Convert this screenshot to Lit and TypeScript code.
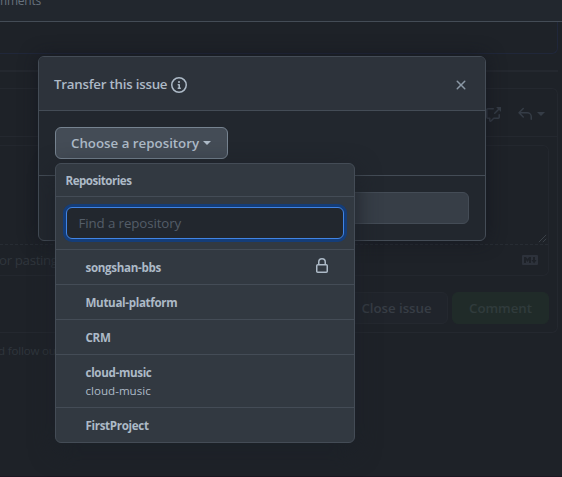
import { LitElement, html, css, svg, nothing } from "lit";
import { customElement, property } from "lit/decorators.js";

const ICONS: Record<string, unknown> = {
  info: svg`<path d="M8 1.5a6.5 6.5 0 100 13 6.5 6.5 0 000-13zM0 8a8 8 0 1116 0A8 8 0 010 8zm6.5-.25A.75.75 0 017.25 7h1a.75.75 0 01.75.75v2.75h.25a.75.75 0 010 1.5h-2a.75.75 0 010-1.5h.25v-2h-.25a.75.75 0 01-.75-.75zM8 6a1 1 0 100-2 1 1 0 000 2z"/>`,
  x: svg`<path d="M3.72 3.72a.75.75 0 011.06 0L8 6.94l3.22-3.22a.75.75 0 111.06 1.06L9.06 8l3.22 3.22a.75.75 0 11-1.06 1.06L8 9.06l-3.22 3.22a.75.75 0 01-1.06-1.06L6.94 8 3.72 4.78a.75.75 0 010-1.06z"/>`,
  lock: svg`<path fill-rule="evenodd" d="M4 4v2h-.25A1.75 1.75 0 002 7.75v5.5c0 .966.784 1.75 1.75 1.75h8.5A1.75 1.75 0 0014 13.25v-5.5A1.75 1.75 0 0012.25 6H12V4a4 4 0 10-8 0zm6.5 2V4a2.5 2.5 0 00-5 0v2h5zM3.75 7.5a.25.25 0 00-.25.25v5.5c0 .138.112.25.25.25h8.5a.25.25 0 00.25-.25v-5.5a.25.25 0 00-.25-.25z"/>`,
  cross: svg`<path d="M16 1.25v4.146a.25.25 0 01-.427.177L14.03 4.03l-3.75 3.75a.75.75 0 11-1.06-1.06l3.75-3.75-1.543-1.543A.25.25 0 0111.604 1h4.146a.25.25 0 01.25.25zM2.75 3.5a.25.25 0 00-.25.25v7.5c0 .138.112.25.25.25h2a.75.75 0 01.75.75v2.19l2.72-2.72a.75.75 0 01.53-.22h4.5a.25.25 0 00.25-.25v-2.5a.75.75 0 111.5 0v2.5A1.75 1.75 0 0113.25 13H9.06l-2.573 2.573A1.457 1.457 0 014 14.543V13H2.75A1.75 1.75 0 011 11.25v-7.5C1 2.784 1.784 2 2.75 2h5.5a.75.75 0 010 1.5h-5.5z"/>`,
  reply: svg`<path d="M6.78 1.97a.75.75 0 010 1.06L3.81 6h6.44A4.75 4.75 0 0115 10.75v2.5a.75.75 0 01-1.5 0v-2.5a3.25 3.25 0 00-3.25-3.25H3.81l2.97 2.97a.75.75 0 11-1.06 1.06L1.47 7.28a.75.75 0 010-1.06l4.25-4.25a.75.75 0 011.06 0z"/>`,
  markdown: svg`<path fill-rule="evenodd" d="M1 3h14a1 1 0 011 1v8a1 1 0 01-1 1H1a1 1 0 01-1-1V4a1 1 0 011-1zM9 11V5H7L5.5 7 4 5H2v6h2V8l1.5 1.9L7 8v3h2zm3.1.5L14.5 8H13V5h-2v3H9.5l2.6 3.5z"/>`,
  grip: svg`<path d="M1.5 14.5l13-13M8.5 14.5l6-6" fill="none" stroke="currentColor" stroke-width="1.4"/>`,
};

@customElement("oct-icon")
class OctIcon extends LitElement {
  @property() name = "";
  static styles = css`
    :host { display: inline-flex; width: 16px; height: 16px; flex: none; }
    svg { width: 100%; height: 100%; fill: currentColor; }
  `;
  render() {
    return html`<svg viewBox="0 0 16 16">${ICONS[this.name]}</svg>`;
  }
}

@customElement("issue-page")
class IssuePage extends LitElement {
  static styles = css`
    :host { display: flex; flex-direction: column; box-sizing: border-box; height: 477px; background: #1e2228; border-bottom: 1px solid #1c1722; }
    * { box-sizing: border-box; }
    .top { height: 22px; background: #22272e; border-bottom: 1px solid #444c56; color: #67717d; font-size: 12px; line-height: 16px; letter-spacing: -0.2px; overflow: hidden; flex: none; }
    .top span { display: block; margin: -7px 0 0 -4px; }
    .prev { height: 32px; width: 558px; border: solid #20273a; border-width: 0 1px 1px 0; border-radius: 0 0 6px 0; flex: none; }
    .rule { height: 2px; width: 558px; margin-top: 16px; background: #24282f; flex: none; }
    .comment { width: 558px; height: 245px; margin-top: 16px; border: 1px solid #24282f; border-left: 0; border-radius: 0 6px 6px 0; flex: none; display: flex; flex-direction: column; }
    .tools { height: 48px; border-bottom: 1px solid #24282f; display: flex; justify-content: flex-end; align-items: center; padding: 2px 12px 0 0; color: #353c46; }
    .tools .reply { margin-left: 16px; }
    .caret { border: 4px solid transparent; border-top-color: currentColor; border-bottom: 0; margin-left: 4px; }
    .box { width: 549px; height: 131px; margin-top: 8px; border: 1px solid #23272e; border-left: 0; border-radius: 0 6px 6px 0; display: flex; flex-direction: column; }
    .area { height: 99px; border-bottom: 1px dashed #272c33; display: flex; justify-content: flex-end; align-items: flex-end; color: #444a52; }
    .area oct-icon { width: 9px; height: 9px; margin: 0 1px 1px 0; }
    .hint { flex: 1; display: flex; justify-content: space-between; align-items: center; padding-right: 10px; color: #30363d; font-size: 13.3px; letter-spacing: -0.35px; white-space: nowrap; }
    .hint span { margin-left: -1px; }
    .hint oct-icon { color: #2d323b; }
    .actions { display: flex; justify-content: flex-end; gap: 4px; padding: 16px 8px 0 0; font-size: 13.3px; font-weight: 600; letter-spacing: -0.05px; }
    .btn { height: 32px; border-radius: 6px; border: 1px solid #24282f; background: #20242b; color: #373d45; line-height: 30px; text-align: center; width: 103px; white-space: nowrap; }
    .btn.go { width: 97px; background: #202b29; border-color: #202b29; color: #303b3c; }
    .foot { margin-top: 10px; color: #30363d; font-size: 11.5px; letter-spacing: -0.15px; line-height: 16px; white-space: nowrap; }
    .foot span { margin-left: -2px; }
  `;
  render() {
    return html`
      <div class="top"><span>mments</span></div>
      <div class="prev"></div>
      <div class="rule"></div>
      <div class="comment">
        <div class="tools">
          <oct-icon name="cross"></oct-icon>
          <oct-icon class="reply" name="reply"></oct-icon>
          <i class="caret"></i>
        </div>
        <div class="box">
          <div class="area"><oct-icon name="grip"></oct-icon></div>
          <div class="hint"><span>or pasting</span><oct-icon name="markdown"></oct-icon></div>
        </div>
        <div class="actions">
          <div class="btn">Close issue</div>
          <div class="btn go">Comment</div>
        </div>
      </div>
      <div class="foot"><span>d follow our</span></div>
    `;
  }
}

interface Repo { name: string; description?: string; locked?: boolean; }

@customElement("repo-menu")
class RepoMenu extends LitElement {
  repos: Repo[] = [
    { name: "songshan-bbs", locked: true },
    { name: "Mutual-platform" },
    { name: "CRM" },
    { name: "cloud-music", description: "cloud-music" },
    { name: "FirstProject" },
  ];
  static styles = css`
    :host { display: block; box-sizing: border-box; width: 300px; border: 1px solid #444c56; border-radius: 6px; background: #323941; box-shadow: 0 8px 24px #1c2128; font-size: 11.6px; color: #adbac7; }
    * { box-sizing: border-box; }
    .head { height: 33px; border-bottom: 1px solid #444c56; padding-left: 9.5px; line-height: 33px; font-weight: 700; letter-spacing: -0.5px; }
    .filter { height: 53px; padding: 10px; border-bottom: 1px solid #444c56; }
    .input { height: 32px; border: 1px solid #4184e4; border-radius: 6px; background: #22272e; box-shadow: 0 0 0 3px #143d79; padding-left: 11.5px; line-height: 30px; font-size: 13.3px; letter-spacing: -0.1px; color: #545d68; }
    .item { min-height: 35px; padding: 8px 24px 8px 29.5px; display: flex; justify-content: space-between; border-bottom: 1px solid #444c56; line-height: 18px; }
    .item:last-child { border-bottom: 0; min-height: 34px; }
    .name { font-weight: 700; letter-spacing: -0.33px; padding-top: 1px; height: 18px; }
    .desc { padding-top: 1px; height: 18px; }
  `;
  render() {
    return html`
      <div class="head">Repositories</div>
      <div class="filter"><div class="input">Find a repository</div></div>
      ${this.repos.map((r) => html`
        <div class="item">
          <div><div class="name">${r.name}</div>${r.description ? html`<div class="desc">${r.description}</div>` : nothing}</div>
          ${r.locked ? html`<oct-icon name="lock"></oct-icon>` : nothing}
        </div>`)}
    `;
  }
}

@customElement("transfer-dialog")
class TransferDialog extends LitElement {
  static styles = css`
    :host { display: block; box-sizing: border-box; width: 448px; height: 185px; border: 1px solid #444c56; border-radius: 6px; background: #22272e; box-shadow: 0 0 18px rgba(19, 22, 30, 0.7); color: #adbac7; font-size: 13.3px; font-weight: 600; }
    * { box-sizing: border-box; }
    .head { height: 54px; background: #2d333b; border-bottom: 1px solid #444c56; border-radius: 5px 5px 0 0; display: flex; align-items: center; padding: 2px 16px 0 15px; }
    .title { letter-spacing: -0.23px; margin-top: -2px; }
    .info { margin: 0 0 0 3.5px; }
    .close { margin-left: auto; color: #8b98a5; }
    .body { height: 65px; padding: 16px; border-bottom: 1px solid #444c56; }
    .choose { height: 32px; width: 173px; border: 1px solid #768390; border-radius: 6px; background: #444c56; display: flex; align-items: center; padding-left: 15px; letter-spacing: 0; white-space: nowrap; }
    .caret { border: 4px solid transparent; border-top-color: currentColor; border-bottom: 0; margin-left: 4px; }
    .foot { padding: 16px; }
    .submit { height: 32px; border: 1px solid #444c56; border-radius: 6px; background: #373e47; }
    repo-menu { position: absolute; top: 106px; left: 16px; font-weight: 400; }
  `;
  render() {
    return html`
      <div class="head">
        <span class="title">Transfer this issue</span>
        <oct-icon class="info" name="info"></oct-icon>
        <oct-icon class="close" name="x"></oct-icon>
      </div>
      <div class="body"><div class="choose">Choose a repository<i class="caret"></i></div></div>
      <div class="foot"><div class="submit"></div></div>
      <repo-menu></repo-menu>
    `;
  }
}

@customElement("app-root")
class AppRoot extends LitElement {
  static styles = css`
    :host { display: block; position: relative; width: 562px; height: 477px; overflow: hidden; font-family: "Open Sans", "Noto Sans", sans-serif; }
    transfer-dialog { position: absolute; left: 38px; top: 56px; }
  `;
  render() {
    return html`<issue-page></issue-page><transfer-dialog></transfer-dialog>`;
  }
}
